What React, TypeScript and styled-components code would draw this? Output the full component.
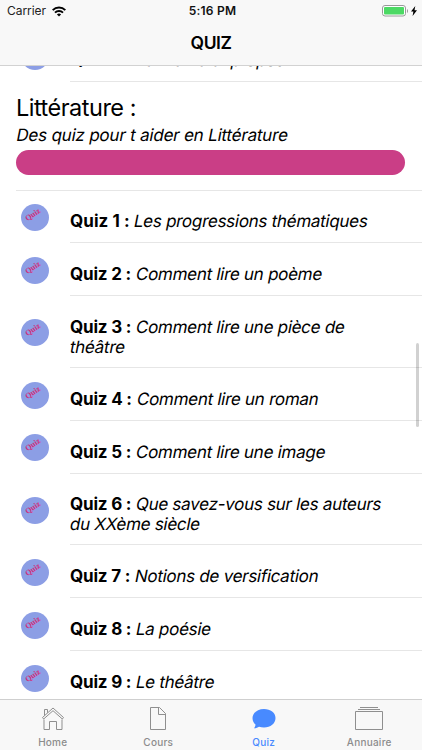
import React from "react";
import styled, { createGlobalStyle } from "styled-components";

const Global = createGlobalStyle`
  * { box-sizing: border-box; }
  body { margin: 0; background: #fff; color: #000; font-family: Inter, "Liberation Sans", sans-serif; overflow: hidden; }
`;
const Screen = styled.div`
  width: 422px; height: 750px; display: flex; flex-direction: column; overflow: hidden; position: relative;
`;
const Header = styled.header`
  height: 66px; flex: none; background: #f8f8f8; border-bottom: 1px solid #d2d2d2;
`;
const StatusBar = styled.div`
  height: 22px; display: grid; grid-template-columns: 1fr auto 1fr; align-items: center; padding: 0 5px 0 7px;
  font-size: 12px; line-height: 22px;
`;
const Carrier = styled.div`
  display: flex; align-items: center; gap: 6px; letter-spacing: -0.05px; color: #222;
`;
const Clock = styled.div`
  font-weight: 600; letter-spacing: 0.25px; color: #111; padding-left: 1px;
`;
const Power = styled.div`
  display: flex; justify-content: flex-end; align-items: center; gap: 3px;
`;
const Title = styled.h1`
  margin: 0; text-align: center; font-size: 17.5px; line-height: 42px; font-weight: 600; letter-spacing: -0.45px;
`;
const Content = styled.main`
  flex: 1; min-height: 0; overflow: hidden;
`;
const List = styled.div<{ $shift?: number }>`
  display: flex; flex-direction: column; margin-top: ${(p) => p.$shift ?? 0}px;
`;
const Row = styled.div<{ $tall?: boolean }>`
  height: ${(p) => (p.$tall ? 71.8 : 52.8)}px; flex: none; display: flex; align-items: center; padding-left: 21px;
`;
const Badge = styled.svg`
  width: 28px; height: 27px; flex: none; margin: 1.6px 21px 0 0;
`;
const Body = styled.div`
  flex: 1; height: 100%; display: flex; align-items: center; padding-top: 10px; border-bottom: 1px solid #e6e6e6;
`;
const Text = styled.div`
  font-size: 17px; line-height: 20px; white-space: nowrap;
`;
const Label = styled.span<{ $ls?: number }>`
  font-weight: 700; letter-spacing: ${(p) => p.$ls ?? -0.2}px;
`;
const Slanted = styled.span<{ $ls?: number }>`
  display: inline-block; transform: skewX(-11deg); transform-origin: 0 80%; margin-left: -1px;
  letter-spacing: ${(p) => p.$ls ?? -0.28}px;
`;
const Section = styled.section`
  height: 108.8px; margin-left: 16px; padding-top: 12px; border-bottom: 1px solid #e6e6e6;
`;
const Heading = styled.h2`
  margin: 0; font-weight: 400; font-size: 23.5px; line-height: 28px; letter-spacing: -0.5px;
`;
const Subtitle = styled.div`
  font-size: 17px; line-height: 27px;
`;
const Bar = styled.div`
  height: 25px; margin: 1px 17px 0 0; border-radius: 13px; background: #ca3e86;
`;
const ScrollThumb = styled.div`
  position: absolute; left: 416px; top: 343px; width: 3px; height: 84px; border-radius: 2px; background: rgba(0, 0, 0, 0.18);
`;
const Tabs = styled.nav`
  height: 51px; flex: none; display: grid; grid-template-columns: repeat(4, 1fr); background: #f8f8f8;
  border-top: 1px solid #cfcfcf;
`;
const Tab = styled.div<{ $active?: boolean }>`
  display: flex; flex-direction: column; align-items: center; padding-top: 6px; font-size: 10px; line-height: 12px;
  font-weight: 500; letter-spacing: 0.25px; color: ${(p) => (p.$active ? "#488aff" : "#8c8c8c")};
`;
const TabIcon = styled.svg`
  width: 30px; height: 27px; margin-bottom: 3px; fill: none; stroke: #8f8f8f; stroke-width: 1;
`;

const QuizBadge = () => (
  <Badge viewBox="0 0 28 27">
    <ellipse cx="14" cy="13.5" rx="14" ry="13.5" fill="#8c9ee5" />
    <text x="12" y="13" transform="rotate(-35 12 11)" textAnchor="middle" fontFamily="Liberation Serif, serif"
      fontWeight="700" fontSize="8" fill="#d02f7c">Quiz</text>
  </Badge>
);

type Quiz = { n: number; lines: string[]; ls?: number; labelLs?: number };
const quizzes: Quiz[] = [
  { n: 1, lines: ["Les progressions thématiques"], labelLs: 0.05 },
  { n: 2, lines: ["Comment lire un poème"] },
  { n: 3, lines: ["Comment lire une pièce de", "théâtre"] },
  { n: 4, lines: ["Comment lire un roman"] },
  { n: 5, lines: ["Comment lire une image"] },
  { n: 6, lines: ["Que savez-vous sur les auteurs", "du XXème siècle"] },
  { n: 7, lines: ["Notions de versification"] },
  { n: 8, lines: ["La poésie"] },
  { n: 9, lines: ["Le théâtre"] },
];

const QuizRow = ({ n, lines, ls, labelLs }: Quiz) => (
  <Row $tall={lines.length > 1}>
    <QuizBadge />
    <Body>
      <Text>
        <Label $ls={labelLs}>Quiz {n} :</Label> <Slanted $ls={ls}>{lines[0]}</Slanted>
        {lines[1] && <><br /><Slanted $ls={ls}>{lines[1]}</Slanted></>}
      </Text>
    </Body>
  </Row>
);

export default function App() {
  return (
    <>
      <Global />
      <Screen>
        <Header>
          <StatusBar>
            <Carrier>
              Carrier
              <svg width="14" height="11" viewBox="0 0 14 11" fill="none" stroke="#000" strokeWidth="2">
                <path d="M.7 4.1a9 9 0 0 1 12.6 0M3 6.6a5.7 5.7 0 0 1 8 0" />
                <path d="M7 10.6 4.9 8.5a3 3 0 0 1 4.2 0z" fill="#000" stroke="none" />
              </svg>
            </Carrier>
            <Clock>5:16 PM</Clock>
            <Power>
              <svg width="26" height="12" viewBox="0 0 26 12">
                <rect x=".5" y=".5" width="23" height="10.5" rx="2.5" fill="#fff" stroke="#999" />
                <rect x="2" y="2" width="20" height="7.5" rx="1" fill="#4cd964" />
                <path d="M25 4v4q1-.5 1-2t-1-2" fill="#999" />
              </svg>
              <svg width="6" height="10" viewBox="0 0 6 10"><path d="M4.3 0 0 5.5h2.4L1.6 10 6 4.2H3.5z" /></svg>
            </Power>
          </StatusBar>
          <Title>QUIZ</Title>
        </Header>
        <Content>
          <List $shift={-37}>
            <QuizRow n={6} lines={["Le thème et propos"]} ls={-0.4} />
            <Section>
              <Heading>Littérature :</Heading>
              <Subtitle><Slanted $ls={-0.2}>Des quiz pour t aider en Littérature</Slanted></Subtitle>
              <Bar />
            </Section>
            {quizzes.map((q) => <QuizRow key={q.n} {...q} />)}
          </List>
        </Content>
        <Tabs>
          <Tab>
            <TabIcon viewBox="0 0 30 27"><path d="M4.500 11.500 15 2l10.500 9.500-1.200 1.500L15 4.700 5.700 13zM6.500 9.500v-6h3v3.200M6 13.500V23.500h5.500v-8h7v8H24V13.500" /></TabIcon>
            Home
          </Tab>
          <Tab>
            <TabIcon viewBox="0 0 30 27"><path d="M7.500 1.500h9l6 6v16h-15zM15.500 1.500v7h7" /></TabIcon>
            Cours
          </Tab>
          <Tab $active>
            <TabIcon viewBox="0 0 30 27"><path d="M15 3C8.500 3 3.500 7 3.500 12c0 3.200 1.500 5.200 3 6.500 0 1.500-.7 2.700-1.500 3.700 2.200 0 3.800-.6 5-1.500 1.500.5 3.200.8 5 .8 6.500 0 11.500-4 11.500-9.500S21.500 3 15 3z" fill="#488aff" stroke="none" /></TabIcon>
            Quiz
          </Tab>
          <Tab>
            <TabIcon viewBox="0 0 30 27"><path d="M1.500 5.500h27v18h-27zM4 3.500h22M6 1.500h18" /></TabIcon>
            Annuaire
          </Tab>
        </Tabs>
        <ScrollThumb />
      </Screen>
    </>
  );
}
